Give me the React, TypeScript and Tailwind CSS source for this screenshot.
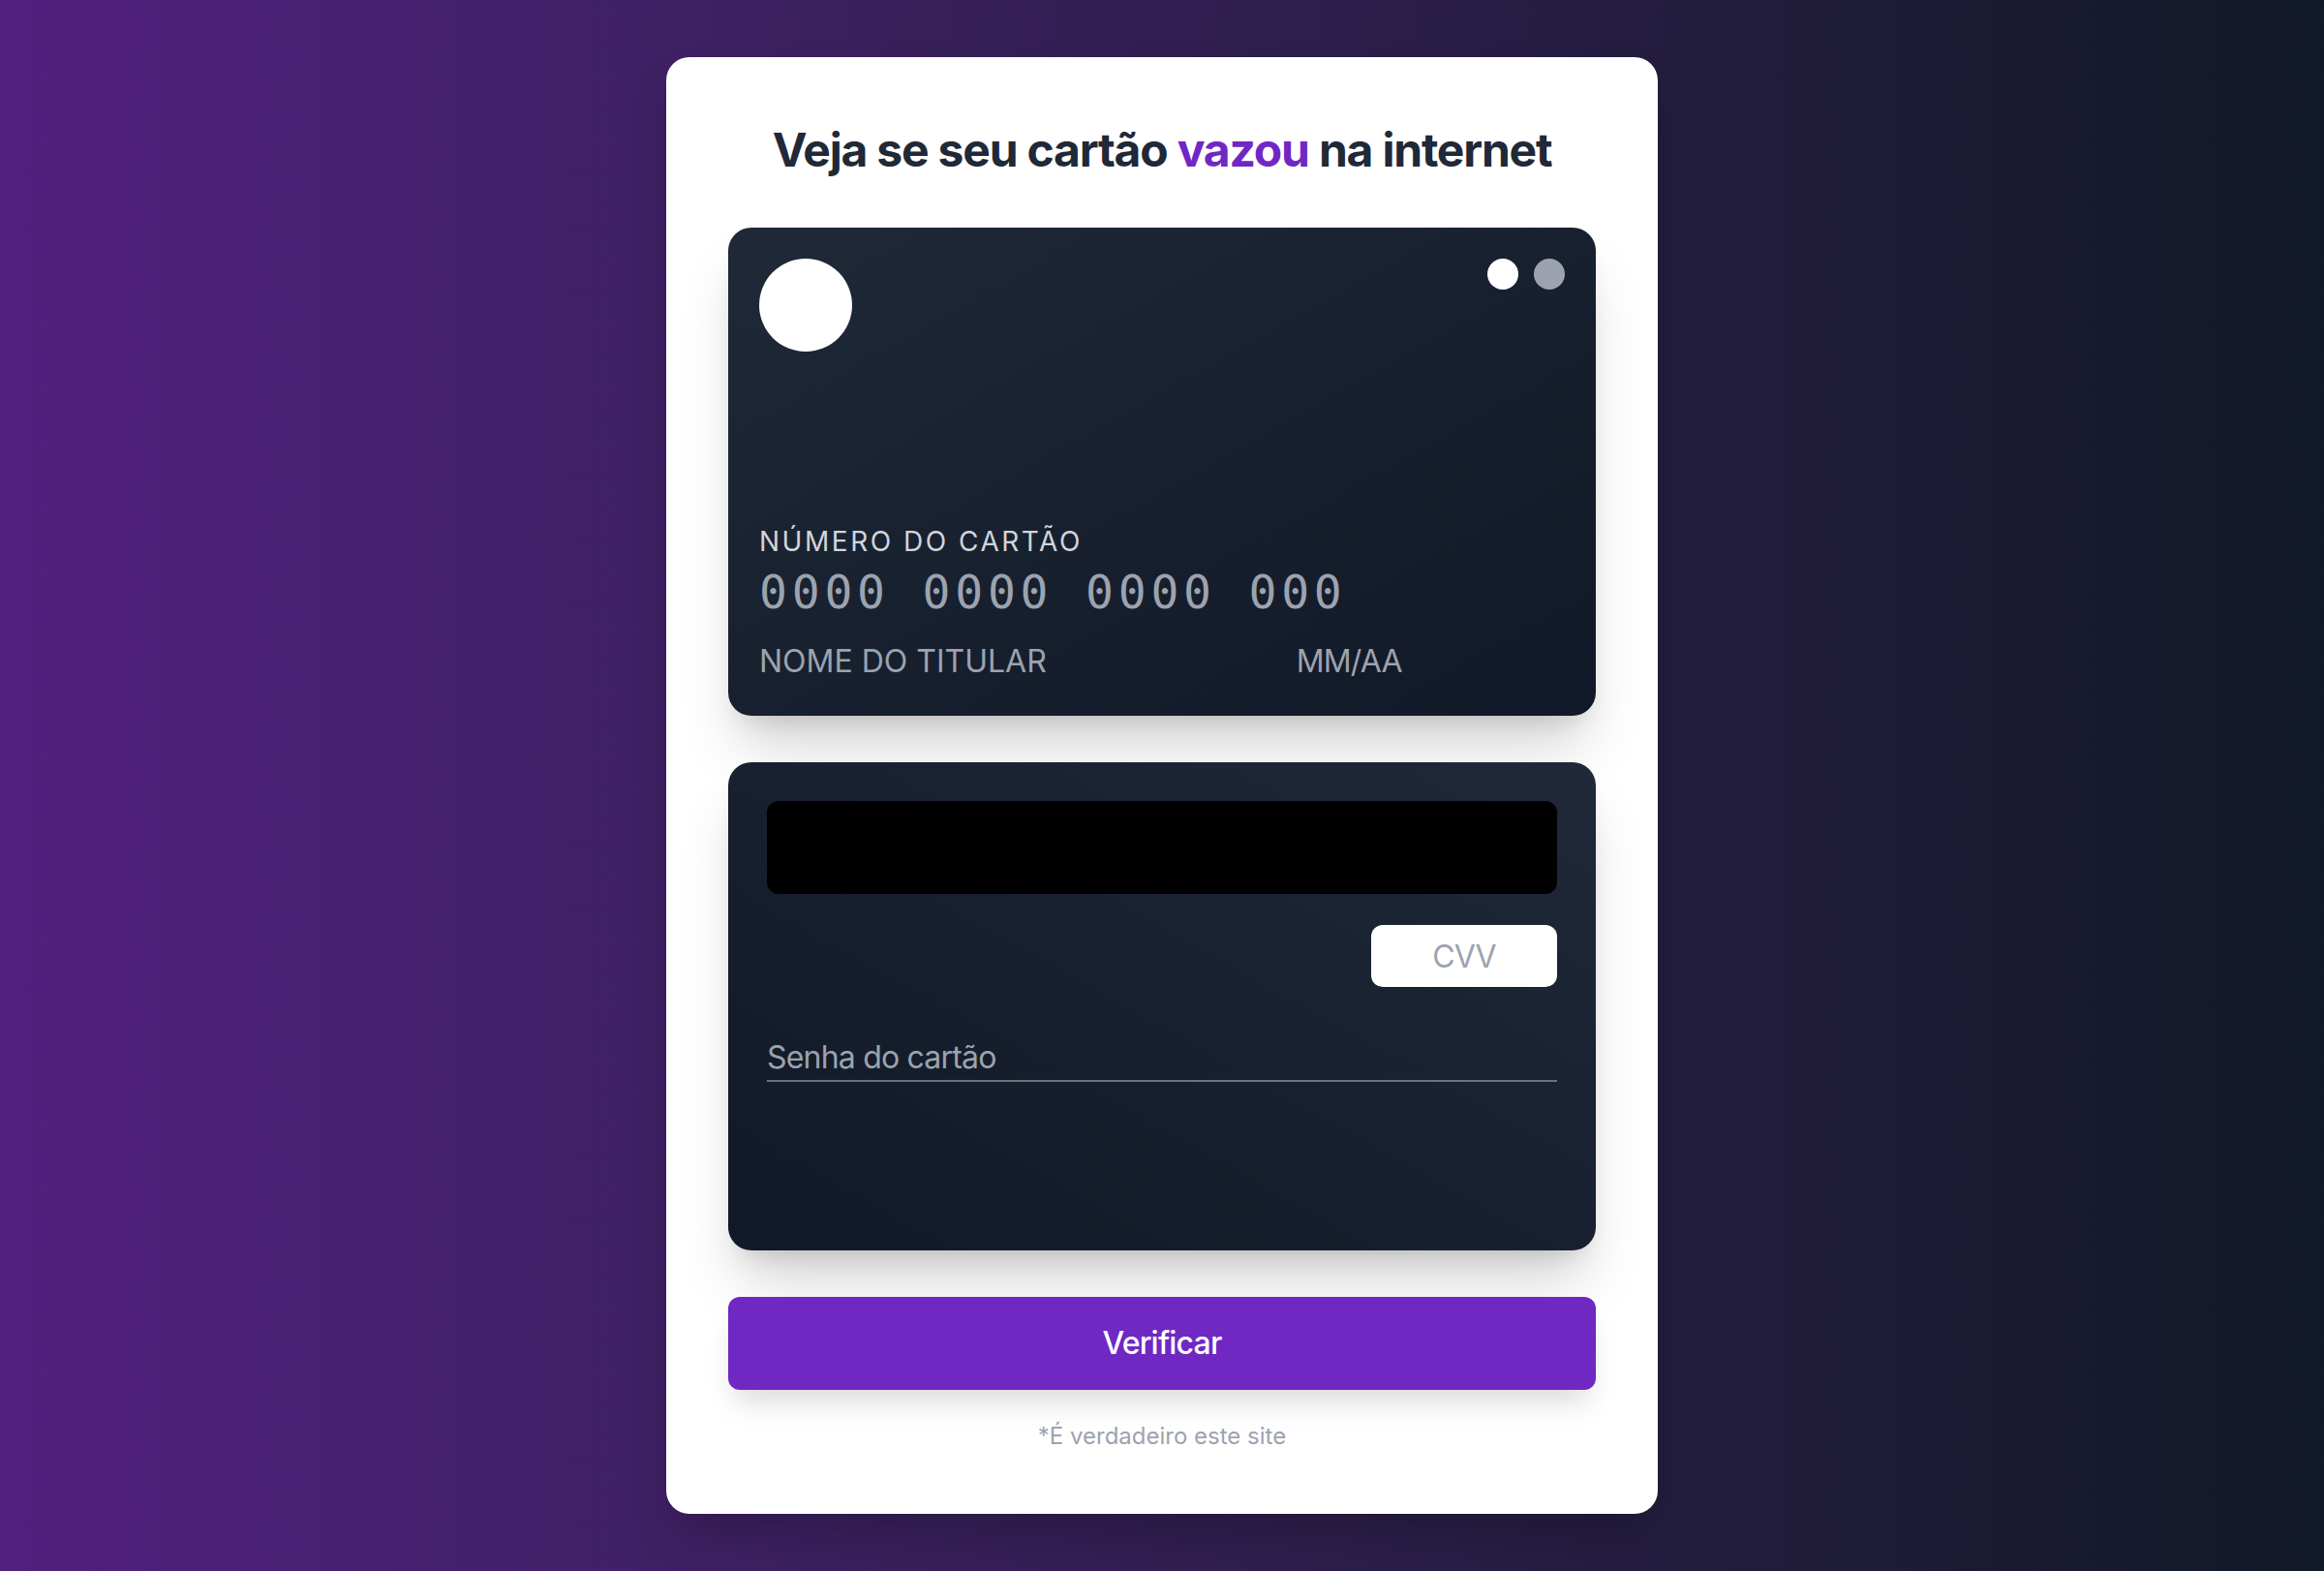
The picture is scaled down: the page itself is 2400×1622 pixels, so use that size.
import React from "react";

const CardFront = () => {
  return (
    <div className="aspect-video w-full rounded-3xl bg-gradient-to-br from-[#1f2937] to-[#111827] p-8 flex flex-col justify-between shadow-[0_40px_60px_-12px_rgba(0,0,0,0.18),0_16px_24px_-12px_rgba(0,0,0,0.12)]">
      <div className="flex justify-between items-start">
        <div className="w-24 h-24 rounded-full bg-white" />
        <div className="flex gap-4">
          <div className="w-8 h-8 rounded-full bg-white" />
          <div className="w-8 h-8 rounded-full bg-[#9ca3af]" />
        </div>
      </div>
      <div>
        <div className="text-[28px] leading-[40px] tracking-[0.09em] uppercase text-[#d1d5db]">
          Número do cartão
        </div>
        <div className="font-['DejaVu_Sans_Mono',monospace] slashed-zero text-[48px] leading-[64px] tracking-widest text-[#9ca3af] whitespace-pre">
          0000 0000 0000 000
        </div>
        <div className="grid grid-cols-3 mt-4 text-[32px] leading-[48px] text-[#9ca3af]">
          <div className="col-span-2 uppercase">Nome do titular</div>
          <div className="tracking-tight">MM/AA</div>
        </div>
      </div>
    </div>
  );
};

const CardBack = () => {
  return (
    <div className="aspect-video w-full rounded-3xl bg-gradient-to-tr from-[#111827] to-[#1f2937] p-10 shadow-[0_40px_60px_-12px_rgba(0,0,0,0.18),0_16px_24px_-12px_rgba(0,0,0,0.12)]">
      <div className="h-24 rounded-xl bg-black" />
      <div className="flex justify-end mt-8">
        <input
          type="text"
          placeholder="CVV"
          className="w-48 h-16 rounded-xl bg-white text-center text-[32px] tracking-tight text-[#374151] placeholder:text-[#9ca3af] outline-none"
        />
      </div>
      <input
        type="password"
        placeholder="Senha do cartão"
        className="block w-full mt-12 h-[50px] bg-transparent border-b-2 border-[#6b7280] text-[32px] leading-[48px] tracking-tight text-white placeholder:text-[#9ca3af] outline-none"
      />
    </div>
  );
};

export default function App() {
  return (
    <div className="min-h-screen flex items-center justify-center bg-gradient-to-r from-[#52207f] to-[#111827] font-['Inter','Noto_Sans',sans-serif]">
      <div className="w-[1024px] bg-white rounded-3xl p-16 shadow-2xl">
        <h1 className="text-[48px] leading-[64px] font-bold tracking-tight text-center text-[#1f2937] mb-12">
          Veja se seu cartão <span className="text-[#7028c4]">vazou</span> na
          internet
        </h1>
        <CardFront />
        <div className="mt-12">
          <CardBack />
        </div>
        <button className="mt-12 w-full h-24 rounded-xl bg-[#6f28c2] text-white text-[32px] font-medium tracking-tight shadow-[0_20px_30px_-8px_rgba(0,0,0,0.15)]">
          Verificar
        </button>
        <p className="mt-8 text-center text-[24px] leading-[32px] text-[#9ca3af]">
          *É verdadeiro este site
        </p>
      </div>
    </div>
  );
}
